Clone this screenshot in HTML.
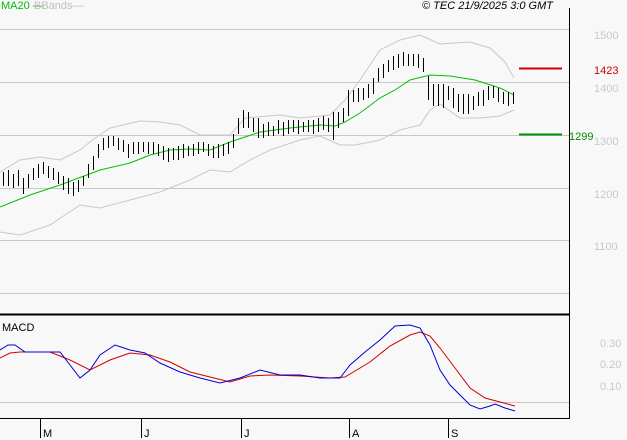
<!DOCTYPE html><html><head><style>body{margin:0;background:#f8f8f8;width:627px;height:440px;overflow:hidden}svg{display:block}text{font-family:"Liberation Sans",sans-serif;font-size:11px}</style></head><body>
<svg width="627" height="440" xmlns="http://www.w3.org/2000/svg">
<rect width="627" height="440" fill="#f8f8f8"/>
<g stroke="#c8c8c8" stroke-width="1">
<line x1="0" y1="29.5" x2="569" y2="29.5"/><line x1="0" y1="82.5" x2="569" y2="82.5"/><line x1="0" y1="135.5" x2="569" y2="135.5"/><line x1="0" y1="188.5" x2="569" y2="188.5"/><line x1="0" y1="240.5" x2="569" y2="240.5"/><line x1="0" y1="293.5" x2="569" y2="293.5"/><line x1="0" y1="402.5" x2="569" y2="402.5"/></g>
<line x1="569.5" y1="8" x2="569.5" y2="419" stroke="#000"/>
<line x1="0" y1="314.5" x2="570" y2="314.5" stroke="#000" stroke-width="2"/>
<line x1="0" y1="418.5" x2="570" y2="418.5" stroke="#000"/>
<g stroke="#000"><line x1="40.5" y1="419" x2="40.5" y2="438"/><line x1="141.5" y1="419" x2="141.5" y2="438"/><line x1="241.5" y1="419" x2="241.5" y2="438"/><line x1="349.5" y1="419" x2="349.5" y2="438"/><line x1="448.5" y1="419" x2="448.5" y2="438"/></g>
<g font-size="12"><text x="43" y="437">M</text><text x="144" y="437">J</text><text x="244" y="437">J</text><text x="352" y="437">A</text><text x="451" y="437">S</text></g>
<g fill="#c8c8c8" font-size="12"><text x="594" y="39">1500</text><text x="594" y="92">1400</text><text x="594" y="145">1300</text><text x="594" y="198">1200</text><text x="594" y="250">1100</text><text x="600" y="347">0.30</text><text x="600" y="368">0.20</text><text x="600" y="390">0.10</text></g>
<text x="1" y="9" fill="#00c000">MA20 —</text><text x="34" y="9" fill="#c0c0c0">BBands—</text>
<text x="422" y="9" font-style="italic" font-size="11">© TEC 21/9/2025 3:0 GMT</text>
<text x="2" y="331" font-size="10">MACD</text>
<line x1="519" y1="68.5" x2="562" y2="68.5" stroke="#d00000" stroke-width="2"/><text x="594" y="74" fill="#d00000">1423</text>
<line x1="519" y1="134.5" x2="562" y2="134.5" stroke="#009000" stroke-width="2"/><text x="569" y="140" fill="#009000">1299</text>
<g fill="none" stroke="#c8c8c8">
<polyline points="0,172 20,160 40,157 60,160 80,150 95,138 110,128 140,121 160,122 180,125 200,135 230,135 245,118 280,115 300,118 330,115 345,100 360,80 380,50 400,40 420,35 440,44 470,42 490,48 505,62 514,78"/>
<polyline points="0,232 20,235 50,225 80,205 100,208 130,200 160,192 190,180 210,170 230,172 250,160 270,150 300,140 320,136 340,145 355,145 380,140 400,130 420,125 430,110 440,104 460,118 480,118 500,116 514,110"/></g>
<polyline fill="none" stroke="#00c000" points="0,207 30,195 60,185 100,170 130,163 150,155 170,150 190,149 210,150 230,142 260,132 290,128 320,125 335,126 345,122 360,113 380,98 395,90 410,80 430,75 450,76 475,80 500,88 514,95"/>
<g stroke="#000" shape-rendering="crispEdges" transform="translate(0.5,0)"><path d="M3,172v14M8,170v16M13,174v14M18,170v16M23,178v16M28,174v14M33,168v12M38,164v14M43,162v12M48,166v12M53,168v12M58,172v12M63,176v14M68,178v16M73,182v14M78,180v12M83,176v10M88,164v14M93,156v14M98,144v14M103,138v12M108,136v12M113,136v10M118,138v12M123,140v12M128,144v14M133,142v12M138,142v12M143,142v10M148,142v12M153,142v12M158,144v12M163,146v14M168,148v14M173,148v12M178,146v14M183,144v14M188,146v10M193,144v12M198,142v12M203,142v10M208,144v12M213,146v12M218,144v14M223,144v12M228,142v12M233,134v14M238,118v16M243,110v18M248,112v16M253,118v14M258,118v20M263,124v14M268,122v14M273,126v10M278,120v14M283,122v14M288,120v14M293,120v12M298,120v14M303,122v10M308,120v12M313,120v14M318,118v14M323,116v14M328,118v14M333,112v28M338,112v16M343,108v14M348,90v26M353,90v12M358,88v14M363,88v12M368,84v14M373,78v16M378,68v14M383,64v14M388,60v12M393,56v14M398,54v14M403,52v14M408,54v12M413,54v12M418,54v14M423,58v14M428,76v24M433,84v22M438,84v22M443,84v24M448,86v14M453,88v20M458,94v18M463,94v20M468,94v20M473,96v14M478,92v14M483,90v16M488,86v14M493,86v12M498,88v14M503,92v12M508,92v14M513,92v12"/></g>
<polyline fill="none" stroke="#d00000" points="0,358 10,353 20,352 50,352 70,360 90,370 110,360 130,353 150,355 170,362 190,372 210,377 230,382 250,376 270,375 300,376 330,378 345,377 370,362 390,346 410,335 420,332 430,336 440,348 455,368 470,388 485,398 500,402 515,406"/>
<polyline fill="none" stroke="#0000d0" points="0,350 8,345 15,345 25,352 40,352 60,352 70,365 80,378 90,370 100,355 115,345 130,350 145,353 160,363 180,372 200,378 220,383 240,378 260,370 280,375 300,375 320,378 340,378 350,365 365,352 380,340 395,326 410,325 420,328 430,345 440,370 450,385 460,395 470,405 480,409 490,406 495,404 505,408 515,411"/>
</svg></body></html>
